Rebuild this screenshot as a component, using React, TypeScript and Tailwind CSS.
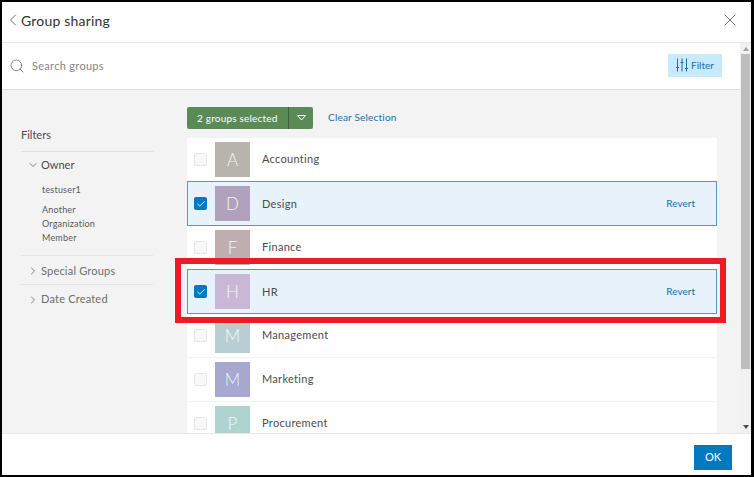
import { ChevronDown, ChevronLeft, ChevronRight, Check, Search, X } from "lucide-react";

const groups = [
  { name: "Accounting", letter: "A", color: "bg-[#b7b4ab]", selected: false },
  { name: "Design", letter: "D", color: "bg-[#b0a1bd]", selected: true },
  { name: "Finance", letter: "F", color: "bg-[#bfaeb0]", selected: false },
  { name: "HR", letter: "H", color: "bg-[#c9b8d5]", selected: true },
  { name: "Management", letter: "M", color: "bg-[#b9ced2]", selected: false },
  { name: "Marketing", letter: "M", color: "bg-[#a7a7d0]", selected: false },
  { name: "Procurement", letter: "P", color: "bg-[#aed3cf]", selected: false },
];

function GroupRow({ g }: { g: (typeof groups)[number] }) {
  return (
    <div
      className={`flex shrink-0 items-start pl-[6px] pr-[21px] pt-[4px] ${
        g.selected
          ? "-mt-[1px] h-[45px] border border-[#4b9ccf] bg-[#e8f2fb]"
          : "h-[44px] border-x border-b border-x-transparent border-b-[#f3f3f3] bg-white"
      }`}
    >
      <div
        className={`mt-[11px] flex h-[13px] w-[13px] items-center justify-center rounded-[2px] ${
          g.selected ? "bg-[#0079c1]" : "border border-[#e6e6e6] bg-[#f8f8f8]"
        }`}
      >
        {g.selected && <Check size={10} strokeWidth={2} className="text-white" />}
      </div>
      <div
        className={`ml-[8px] flex h-[35px] w-[35px] items-center justify-center text-[17px] font-light text-white/85 ${g.color}`}
      >
        {g.letter}
      </div>
      <span
        className={`ml-[12px] text-[11px] tracking-[0.3px] text-[#4c4c4c] ${
          g.selected ? "leading-[35px]" : "leading-[33px]"
        }`}
      >
        {g.name}
      </span>
      {g.selected && <span className="ml-auto text-[10px] leading-[35px] text-[#196fa6]">Revert</span>}
    </div>
  );
}

export default function App() {
  return (
    <div className="h-[477px] w-[754px] overflow-hidden bg-black pb-[2px] pl-[2px] pr-[3px] pt-[2px] font-['Lato',sans-serif]">
      <div className="relative flex h-full flex-col bg-white">
        <div className="flex h-[41px] shrink-0 items-center border-b border-[#e8e8e8] pb-[4px] pl-[1px] pr-[11px]">
          <ChevronLeft size={20} strokeWidth={1} className="text-[#4c4c4c]" />
          <span className="ml-[-2px] text-[14px] tracking-[0.2px] text-[#323232]">Group sharing</span>
          <X size={20} strokeWidth={1} className="ml-auto text-[#595959]" />
        </div>

        <div className="flex min-h-0 flex-1">
          <div className="flex min-w-0 flex-1 flex-col">
            <div className="flex h-[47px] shrink-0 items-center border-b border-[#dfdfdf] pl-[7px] pr-[18px]">
              <Search size={16} strokeWidth={1.2} className="text-[#6e6e6e]" />
              <span className="ml-[7px] text-[11px] tracking-[0.3px] text-[#858585]">Search groups</span>
              <div className="mb-[2px] ml-auto flex h-[23px] w-[54px] items-center justify-center gap-[3px] bg-[#c7eafc] text-[10px] text-[#196fa6]">
                <svg width="12" height="14" viewBox="0 0 12 14" fill="none" stroke="currentColor" strokeWidth="1">
                  <path d="M1.5 0.5v13M6 0.5v13M10.5 0.5v13M0 9.5h3M4.5 4.5h3M9 10.5h3" />
                </svg>
                Filter
              </div>
            </div>

            <div className="flex min-h-0 flex-1 overflow-hidden bg-[#f3f3f3]">
              <div className="w-[185px] shrink-0 pl-[19px] pt-[38px]">
                <div className="w-[132px]">
                  <div className="border-b border-[#dfdfdf] pb-[9px] text-[11px] leading-[14px] text-[#4c4c4c]">Filters</div>
                  <div className="border-b border-[#e4e4e4] pb-[10px] pt-[5px]">
                    <div className="flex items-center pl-[6px] text-[11px] leading-[16px] text-[#4c4c4c]">
                      <ChevronDown size={12} strokeWidth={1.4} className="mr-[2px]" />
                      Owner
                    </div>
                    <div className="pl-[21px] pt-[10px] text-[9px] leading-[14px] tracking-[0.2px] text-[#595959]">
                      <div>testuser1</div>
                      <div className="mt-[6px]">Another<br />Organization<br />Member</div>
                    </div>
                  </div>
                  <div className="flex h-[29px] items-center border-b border-[#e4e4e4] pt-[2px] pl-[6px] text-[11px] tracking-[0.2px] text-[#6e6e6e]">
                    <ChevronRight size={12} strokeWidth={1.4} className="mr-[2px] text-[#4c4c4c]" />
                    Special Groups
                  </div>
                  <div className="flex h-[27px] items-center pt-[2px] pl-[6px] text-[11px] tracking-[0.2px] text-[#6e6e6e]">
                    <ChevronRight size={12} strokeWidth={1.4} className="mr-[2px] text-[#4c4c4c]" />
                    Date Created
                  </div>
                </div>
              </div>

              <div className="w-[530px] shrink-0 pt-[17px]">
                <div className="flex h-[22px] items-center">
                  <div className="flex h-[22px] w-[126px] items-center rounded-[2px] bg-[#5a8a55] text-[10px] tracking-[0.2px] text-white">
                    <span className="w-[101px] pl-[10px]">2 groups selected</span>
                    <span className="flex h-full flex-1 items-center justify-center border-l border-[#3f5f3b]">
                      <svg width="9" height="6" viewBox="0 0 9 6" fill="none" stroke="white" strokeWidth="1">
                        <path d="M0.5 0.5h8L4.5 5z" />
                      </svg>
                    </span>
                  </div>
                  <span className="mb-[2px] ml-[15px] text-[10px] tracking-[0.2px] text-[#196fa6]">Clear Selection</span>
                </div>
                <div className="mt-[9px] flex flex-col">
                  {groups.map((g) => (
                    <GroupRow key={g.name} g={g} />
                  ))}
                </div>
              </div>
            </div>
          </div>

          <div className="relative flex w-[11px] shrink-0 flex-col items-center bg-[#f1f1f1]">
            <div className="mt-[4px] h-0 w-0 border-x-[3px] border-b-[4px] border-x-transparent border-b-[#a3a3a3]" />
            <div className="mt-[3px] h-[315px] w-[9px] bg-[#bdbdbd]" />
            <div className="mt-auto mb-[4px] h-0 w-0 border-x-[3px] border-t-[4px] border-x-transparent border-t-[#505050]" />
          </div>
        </div>

        <div className="flex h-[42px] shrink-0 items-center justify-end border-t border-[#e8e8e8] pr-[17px] pt-[6px]">
          <div className="mr-[2px] flex h-[25px] w-[38px] items-center justify-center bg-[#0079c1] text-[11px] text-white">OK</div>
        </div>

        <div className="pointer-events-none absolute left-[173px] top-[256px] h-[65px] w-[551px] border-[6px] border-[#ed1c24]" />
      </div>
    </div>
  );
}
